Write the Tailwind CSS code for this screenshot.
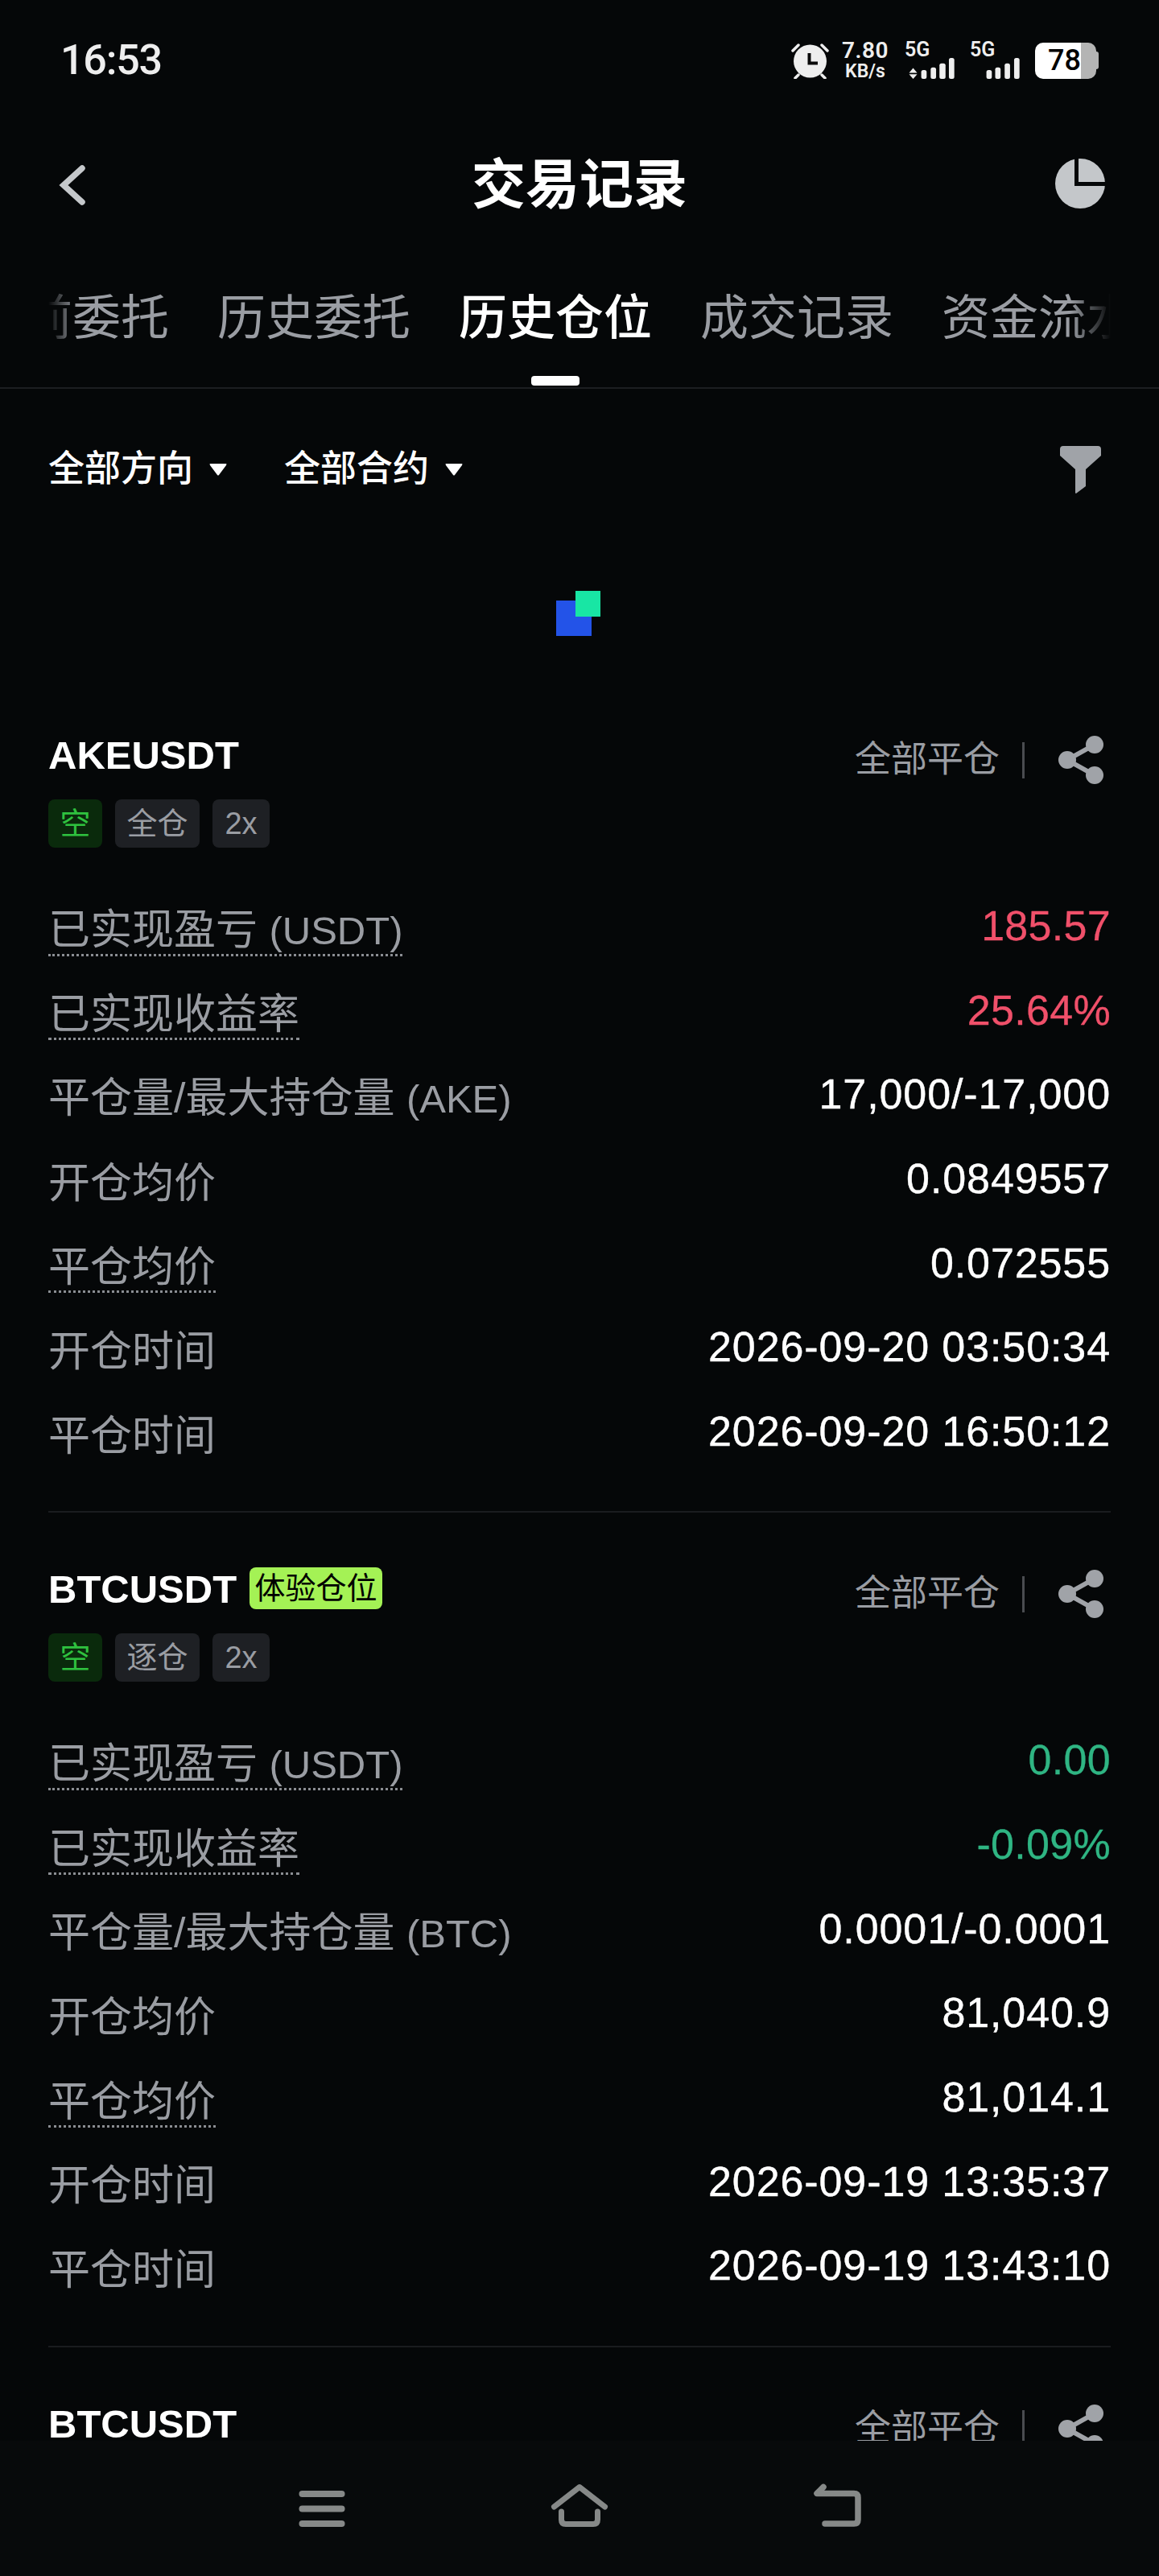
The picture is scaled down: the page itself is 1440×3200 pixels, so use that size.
<!DOCTYPE html>
<html lang="zh-CN">
<head>
  <meta charset="UTF-8" />
  <title>交易记录</title>
  <meta name="viewport" content="width=device-width, initial-scale=1.0" />
  <script src="https://cdn.jsdelivr.net/npm/@tailwindcss/browser@4"></script>
</head>
<body class="bg-[#050708] text-white font-['Liberation_Sans','Noto_Sans_CJK_SC',sans-serif]">
<div class="w-[1440px] h-[3200px] flex flex-col overflow-hidden">

  <!-- Status bar -->
  <div class="h-[150px] shrink-0 flex items-center justify-between pl-[75px] pr-[75px] font-['Roboto','Noto_Sans_CJK_SC',sans-serif] text-[#eeeeee]">
    <span class="text-[52px] leading-[60px] font-medium tracking-[-1.2px]">16:53</span>
    <div class="flex items-center h-[46px]">
      <svg class="w-[47px] h-[46px]" viewBox="0 0 47 46">
        <circle cx="23.5" cy="24" r="20.5" fill="#eeeeee" />
        <path d="M2 11 9 4M45 11 38 4M5 45 9 41M42 45 38 41" stroke="#eeeeee" stroke-width="3.5" stroke-linecap="round" fill="none" />
        <path d="M22.5 14V26.5H33" stroke="#0a0a0a" stroke-width="4" fill="none" />
      </svg>
      <div class="ml-[17px] w-[56px] h-[46px] flex flex-col items-center justify-between font-semibold">
        <span class="text-[28px] leading-[22px] tracking-[0.5px]">7.80</span>
        <span class="text-[23px] leading-[18px]">KB/s</span>
      </div>
      <div class="ml-[21px] w-[68px] h-[46px] flex flex-col justify-between">
        <span class="text-[25px] leading-[20px] font-semibold">5G</span>
        <svg class="w-[68px] h-[31px]" viewBox="0 0 68 31" fill="#eeeeee">
          <path d="M6 15 12 22H0ZM6 31 0 24H12Z" />
          <rect x="18" y="18" width="8" height="13" rx="3" />
          <rect x="32" y="14" width="8" height="17" rx="3" />
          <rect x="45" y="8" width="9" height="23" rx="3" />
          <rect x="59" y="0" width="8" height="31" rx="3" />
        </svg>
      </div>
      <div class="ml-[13px] w-[68px] h-[46px] flex flex-col justify-between">
        <span class="text-[25px] leading-[20px] font-semibold">5G</span>
        <svg class="w-[68px] h-[31px]" viewBox="0 0 68 31" fill="#eeeeee">
          <rect x="18" y="18" width="8" height="13" rx="3" />
          <rect x="31" y="14" width="8" height="17" rx="3" />
          <rect x="45" y="8" width="8" height="23" rx="3" />
          <rect x="59" y="0" width="8" height="31" rx="3" />
        </svg>
      </div>
      <div class="ml-[13px] flex items-center">
        <div class="w-[76px] h-[45px] rounded-[10px] bg-[linear-gradient(90deg,#ffffff_75%,#b4b4b4_75%)] flex items-center pl-[16px]">
          <span class="text-[36px] leading-[40px] font-medium text-black">78</span>
        </div>
        <div class="w-[3px] h-[22px] rounded-r-[3px] bg-[#b4b4b4]"></div>
      </div>
    </div>
  </div>

  <!-- Title bar -->
  <div class="h-[160px] shrink-0 grid grid-cols-[1fr_auto_1fr] items-center px-[70px]">
    <svg class="w-[36px] h-[52px] ml-[2px]" viewBox="0 0 36 52">
      <path d="M30 5 7 26 30 47" stroke="#c5c8cb" stroke-width="7.5" fill="none" stroke-linecap="round" />
    </svg>
    <h1 class="text-[67px] leading-[80px] font-semibold">交易记录</h1>
    <svg class="w-[62px] h-[62px] justify-self-end -mt-[4px] -mr-[3px]" viewBox="0 0 62 62">
      <circle cx="31" cy="31" r="31" fill="#c4c7ca" />
      <path d="M26.5 0V31.5H62" stroke="#050708" stroke-width="5" fill="none" />
    </svg>
  </div>

  <!-- Tabs -->
  <div class="h-[173px] shrink-0 border-b-2 border-[#1c1e21]">
    <div class="mx-[60px] overflow-hidden [mask-image:linear-gradient(90deg,transparent,black_36px,black_1270px,transparent)]">
      <div class="flex gap-[60px] ml-[-90px] text-[60px] leading-[80px] text-[#9a9da3] whitespace-nowrap">
        <div class="w-[240px] shrink-0 h-[171px] pt-[46px] flex flex-col items-center">当前委托</div>
        <div class="w-[240px] shrink-0 h-[171px] pt-[46px] flex flex-col items-center">历史委托</div>
        <div class="w-[240px] shrink-0 h-[171px] pt-[46px] flex flex-col items-center text-white font-medium">
          历史仓位
          <div class="w-[60px] h-[12px] rounded-[4px] bg-white mt-[31px]"></div>
        </div>
        <div class="w-[240px] shrink-0 h-[171px] pt-[46px] flex flex-col items-center">成交记录</div>
        <div class="w-[240px] shrink-0 h-[171px] pt-[46px] flex flex-col items-center">资金流水</div>
      </div>
    </div>
  </div>

  <!-- Filters -->
  <div class="h-[200px] shrink-0 flex items-center pl-[60px] pr-[72px] text-[45px] leading-[60px] font-medium">
    <span>全部方向</span>
    <svg class="ml-[20px] w-[22px] h-[15px]" viewBox="0 0 22 15"><path d="M1 0H21Q22 0 21 2L12 14Q11 15 10 14L1 2Q0 0 1 0Z" fill="#ffffff" /></svg>
    <span class="ml-[71px]">全部合约</span>
    <svg class="ml-[20px] w-[22px] h-[15px]" viewBox="0 0 22 15"><path d="M1 0H21Q22 0 21 2L12 14Q11 15 10 14L1 2Q0 0 1 0Z" fill="#ffffff" /></svg>
    <svg class="ml-auto w-[51px] h-[59px]" viewBox="0 0 51 59">
      <path d="M4 0H47Q51 0 51 4V12L32 29V50L20 59Q19 59 19 58V29L0 12V4Q0 0 4 0Z" fill="#a0a3a8" />
    </svg>
  </div>

  <!-- Loading logo -->
  <div class="relative shrink-0 w-[55px] h-[56px] ml-[691px] mt-[51px]">
    <div class="absolute left-0 bottom-0 w-[44px] h-[44px] bg-[#2353e8]"></div>
    <div class="absolute right-0 top-0 w-[31px] h-[32px] bg-[#18e6a4]"></div>
  </div>

  <!-- Position list -->
  <div id="list" class="mt-[110px] h-[2132px] shrink-0 overflow-hidden"></div>

  <!-- Android nav -->
  <div class="flex-1 bg-[#070a0b] flex justify-center gap-[220px] pt-[50px]">
    <svg class="w-[100px] h-[60px]" viewBox="0 0 100 60" fill="#868988">
      <rect x="21.5" y="12" width="57" height="8" rx="4" />
      <rect x="21.5" y="30.5" width="57" height="8" rx="4" />
      <rect x="21.5" y="49" width="57" height="8" rx="4" />
    </svg>
    <svg class="w-[100px] h-[60px]" viewBox="0 0 100 60" fill="none" stroke="#868988" stroke-width="7" stroke-linecap="round" stroke-linejoin="round">
      <path d="M18.5 32 50 7.5 81.5 32" />
      <path d="M27.5 38V48Q27.5 53.5 33 53.5H67Q72.5 53.5 72.5 48V38" />
    </svg>
    <svg class="w-[100px] h-[60px]" viewBox="0 0 100 60" fill="none" stroke="#868988" stroke-width="7.5" stroke-linecap="round" stroke-linejoin="round">
      <path d="M33 7.5 25 15.5H71Q76 15.5 76 20.5V48Q76 53 71 53H35" />
    </svg>
  </div>
</div>

<script>
  const shareIcon = `
    <svg class="w-[56px] h-[60px] ml-[42px] mr-[9px]" viewBox="0 0 56 60" fill="#a0a3a8">
      <path d="M45 11 11 30 45 49" stroke="#a0a3a8" stroke-width="6" fill="none" />
      <circle cx="45" cy="11" r="11" /><circle cx="11" cy="30" r="11" /><circle cx="45" cy="49" r="11" />
    </svg>`;

  const rowLabel = (text, unit, dotted) => `
    <span class="${dotted ? 'border-b-[3px] border-dotted border-[#8a8d92]' : 'pb-[3px]'} mt-[8px] leading-[58px] text-[52px] text-[#9a9da3]">${text}${unit ? ` <span class="text-[49px]">${unit}</span>` : ''}</span>`;

  const positions = [
    { symbol: 'AKEUSDT', margin: '全仓', unit: 'AKE', color: 'text-[#f0506a] tracking-[0.3px] [-webkit-text-stroke:0.3px]', pnl: '185.57', rate: '25.64%', size: '17,000/-17,000', open: '0.0849557', close: '0.072555', opened: '2026-09-20 03:50:34', closed: '2026-09-20 16:50:12' },
    { symbol: 'BTCUSDT', trial: true, margin: '逐仓', unit: 'BTC', color: 'text-[#2fb583] tracking-[0.3px] [-webkit-text-stroke:0.3px]', pnl: '0.00', rate: '-0.09%', size: '0.0001/-0.0001', open: '81,040.9', close: '81,014.1', opened: '2026-09-19 13:35:37', closed: '2026-09-19 13:43:10' },
  ];

  const header = (p) => `
    <div class="h-[80px] flex items-center justify-between">
      <div class="flex items-center">
        <span class="text-[49px] leading-[60px] font-bold -mt-[4px]">${p.symbol}</span>
        ${p.trial ? '<span class="ml-[16px] w-[165px] text-center h-[52px] -mt-[6px] rounded-[8px] bg-[#a4f255] text-black text-[38px] leading-[52px]">体验仓位</span>' : ''}
      </div>
      <div class="flex items-center mt-[8px]">
        <span class="text-[45px] leading-[60px] text-[#9a9da3]">全部平仓</span>
        <div class="ml-[28px] w-[3px] h-[45px] bg-[#4a4c50]"></div>
        ${shareIcon}
      </div>
    </div>`;

  const row = (label, value, valueClass) => `
    <div class="h-[104.7px] flex items-center justify-between">
      ${label}
      <span class="text-[52px] leading-[60px] -mt-[6px] ${valueClass}">${value}</span>
    </div>`;

  const whiteValue = 'text-white tracking-[0.9px] [-webkit-text-stroke:0.4px]';

  const card = (p) => `
    <div class="mx-[60px] pb-[44px] mb-[57px] border-b-2 border-[#1a1c1f]">
      ${header(p)}
      <div class="mt-[13px] flex gap-[16px] text-[38px] leading-[60px] text-[#9a9da3]">
        <span class="w-[67px] h-[60px] rounded-[8px] bg-[#0a2a0c] text-[#2fc13f] text-center">空</span>
        <span class="w-[105px] h-[60px] rounded-[8px] bg-[#1e2024] text-center">${p.margin}</span>
        <span class="w-[71px] h-[60px] rounded-[8px] bg-[#1e2024] text-center">2x</span>
      </div>
      <div class="mt-[47.6px]">
        ${row(rowLabel('已实现盈亏', '(USDT)', true), p.pnl, p.color)}
        ${row(rowLabel('已实现收益率', '', true), p.rate, p.color)}
        ${row(rowLabel('平仓量/最大持仓量', `(${p.unit})`, false), p.size, whiteValue)}
        ${row(rowLabel('开仓均价', '', false), p.open, whiteValue)}
        ${row(rowLabel('平仓均价', '', true), p.close, whiteValue)}
        ${row(rowLabel('开仓时间', '', false), p.opened, whiteValue)}
        ${row(rowLabel('平仓时间', '', false), p.closed, whiteValue)}
      </div>
    </div>`;

  document.getElementById('list').innerHTML =
    positions.map(card).join('') +
    `<div class="mx-[60px]">${header({ symbol: 'BTCUSDT' })}</div>`;
</script>
</body>
</html>
